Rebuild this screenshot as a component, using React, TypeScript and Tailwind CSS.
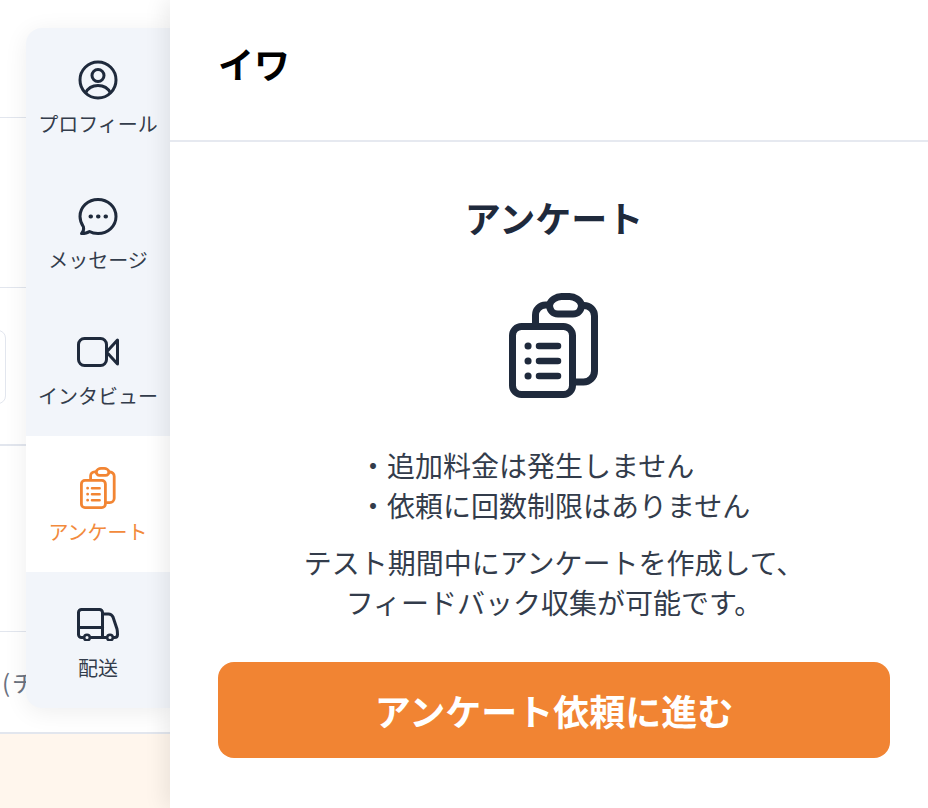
import type { ReactNode } from "react";

const jp = "font-['Noto_Sans_CJK_JP','Noto_Sans',sans-serif]";

function ClipboardIcon({ width, height, color }: { width: number; height: number; color: string }) {
  return (
    <svg width={width} height={height} viewBox="0 0 90 105" fill="none" stroke={color} strokeWidth="7" strokeLinecap="round" strokeLinejoin="round">
      <rect x="3.500" y="33.500" width="60" height="68" rx="9" />
      <path d="M26.500 30V22a10 10 0 0 1 10-10h4" />
      <path d="M40.500 12c0 5 3.500 9 8.500 9h15c5 0 8.500-4 8.500-9-1-5-7-8.500-12-8.500h-8c-5 0-11 3.500-12 8.500Z" />
      <path d="M72.500 12.500h2.500a10.500 10.500 0 0 1 10.500 10.500v55a11 11 0 0 1-11 11H67" />
      <path d="M30 53h19M30 68h19M30 83h19" strokeWidth="6.500" />
      <path d="M19 53h.1M19 68h.1M19 83h.1" />
    </svg>
  );
}

function Tab({ label, active, children }: { label: string; active?: boolean; children: ReactNode }) {
  return (
    <div className={`h-[136px] flex flex-col items-center pt-[30px] ${active ? "bg-white text-[#f28a3c]" : "text-[#333c4b]"}`}>
      <div className="h-[44px] flex items-center justify-center">{children}</div>
      <div className={`${jp} text-[20px] leading-[28px] mt-[8px] whitespace-nowrap`}>{label}</div>
    </div>
  );
}

export default function App() {
  return (
    <div className="relative w-[928px] h-[808px] overflow-hidden bg-white">
      <div className="flex flex-col w-[170px] h-[808px] bg-white">
        <div className="h-[118px] border-b border-[#e2e6ee]" />
        <div className="h-[170px] border-b border-[#e2e6ee]" />
        <div className="h-[158px] border-b-2 border-[#e2e6ee] relative">
          <div className="absolute left-[-10px] top-[42px] w-[16px] h-[74px] rounded-[8px] border border-[#e2e6ee]" />
        </div>
        <div className="h-[186px] border-b border-[#e2e6ee]" />
        <div className={`${jp} h-[102px] border-b-2 border-[#e2e6ee] pl-[2px] text-[24px] leading-[36px] tracking-[2px] text-[#6b7280] pt-[32px] whitespace-nowrap overflow-hidden`}>(チ</div>
        <div className="flex-1 bg-[#fff6ed]" />
      </div>

      <div className="absolute left-[26px] top-[28px] w-[144px] rounded-l-[16px] overflow-hidden bg-[#f2f5fa] shadow-[0_4px_24px_rgba(0,0,0,0.07)]">
        <Tab label="プロフィール">
          <svg width="40" height="40" viewBox="0 0 40 40" fill="none" stroke="#1f2a3c" strokeWidth="3">
            <circle cx="20" cy="20" r="18" />
            <circle cx="20" cy="15.500" r="6" />
            <path d="M7.500 33c2.500-5 7-7.500 12.500-7.500S30 28 32.500 33" />
          </svg>
        </Tab>
        <Tab label="メッセージ">
          <svg width="40" height="40" viewBox="0 0 40 40" fill="none" stroke="#1f2a3c" strokeWidth="3" strokeLinejoin="round" className="translate-y-px">
            <path d="M20 2.500c10 0 18 7.500 18 17s-8 17-18 17c-3 0-6-.5-8.500-2-2 1.500-5 2-8 2 1.500-1.500 2.500-4 2-6.500C3.500 27 2 23.500 2 19.500c0-9.500 8-17 18-17Z" />
            <path d="M12.500 19.500h.5M20 19.500h.5M27.500 19.500h.5" strokeWidth="4" strokeLinecap="round" />
          </svg>
        </Tab>
        <Tab label="インタビュー">
          <svg width="42" height="30" viewBox="0 0 42 30" fill="none" stroke="#1f2a3c" strokeWidth="3" strokeLinejoin="round">
            <rect x="1.500" y="1.500" width="28" height="27" rx="6" />
            <path d="M29.500 15 40.500 3v24Z" />
          </svg>
        </Tab>
        <Tab label="アンケート" active>
          <ClipboardIcon width={36} height={42} color="#f28533" />
        </Tab>
        <Tab label="配送">
          <svg width="42" height="33" viewBox="0 0 42 33" fill="none" stroke="#1f2a3c" strokeWidth="3" strokeLinejoin="round" strokeLinecap="round">
            <path d="M6 29.500H4.500a3 3 0 0 1-3-3V4.500a3 3 0 0 1 3-3h18a3 3 0 0 1 3 3v25" />
            <path d="M1.500 19.500h24" />
            <path d="M25.500 6h6c2 0 3.500 1 4.500 3l4 12c.5 2 .5 4 .5 5.500 0 2-1 3-3 3h-1" />
            <path d="M14 29.500h15" />
            <circle cx="10" cy="29.500" r="2.800" strokeWidth="2.500" />
            <circle cx="33" cy="29.500" r="2.800" strokeWidth="2.500" />
          </svg>
        </Tab>
      </div>

      <div className="absolute left-[170px] top-0 right-0 bottom-0 bg-white flex flex-col shadow-[-6px_0_20px_rgba(0,0,0,0.08)]">
        <div className="h-[142px] border-b-2 border-[#e6e9f0] pl-[48px] pt-[36px]">
          <div className={`${jp} text-[36px] leading-[54px] font-bold text-black`}>イワ</div>
        </div>
        <div className="flex flex-col items-center w-[672px] ml-[48px]">
          <h2 className={`${jp} mt-[48px] text-[36px] leading-[54px] font-bold text-[#1f2a3c]`}>アンケート</h2>
          <div className="mt-[49px] h-[105px]">
            <ClipboardIcon width={90} height={105} color="#1f2a3c" />
          </div>
          <div className={`${jp} mt-[47px] w-[390px] text-[28px] leading-[40px] text-[#333c4b] whitespace-nowrap`}>
            <div>・追加料金は発生しません</div>
            <div>・依頼に回数制限はありません</div>
          </div>
          <div className={`${jp} mt-[17px] text-center text-[28px] leading-[40px] text-[#333c4b] whitespace-nowrap`}>
            <div>テスト期間中にアンケートを作成して、</div>
            <div>フィードバック収集が可能です。</div>
          </div>
          <button className={`${jp} mt-[40px] w-[672px] h-[96px] rounded-[16px] bg-[#f18433] text-white text-[36px] font-bold`}>アンケート依頼に進む</button>
        </div>
      </div>
    </div>
  );
}
